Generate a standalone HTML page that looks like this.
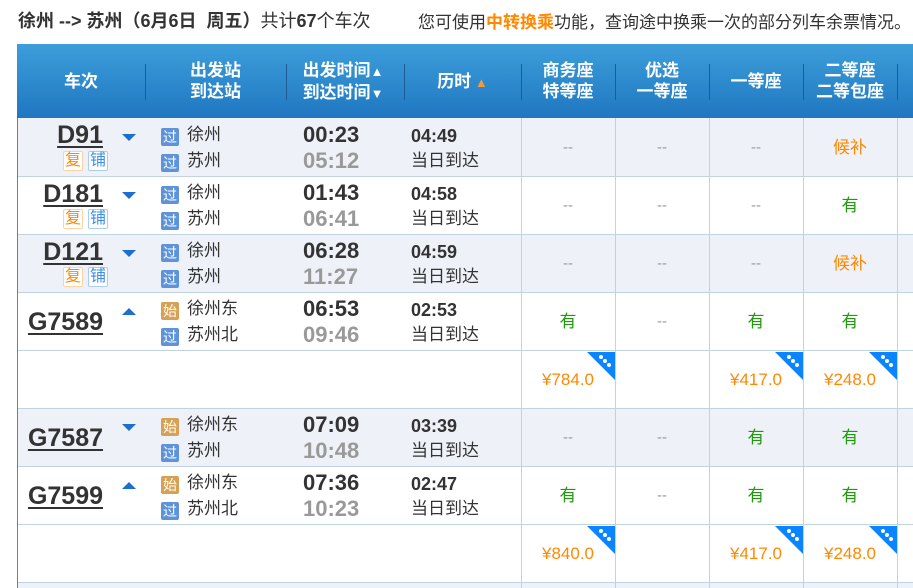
<!DOCTYPE html>
<html><head><meta charset="utf-8"><style>
*{margin:0;padding:0;box-sizing:border-box}
html,body{width:913px;height:588px;overflow:hidden}
body{background:#fff;font-family:"Liberation Sans","Noto Sans CJK SC",sans-serif;position:relative;color:#333}
.a{position:absolute;white-space:nowrap}
.title{left:18px;top:7px;font-size:18px;color:#333}
.title2{left:418px;top:8px;font-size:17px;color:#333}
.hdr{left:17px;top:44px;width:896px;height:74px;background:linear-gradient(#3d9edb,#1f77c0)}
.ht{position:absolute;color:#fff;font-weight:bold;font-size:17px;line-height:21px;text-align:center;white-space:nowrap}
.sep{position:absolute;top:20px;width:1px;height:36px;background:#1d5c96}
.row{position:absolute;left:17px;width:896px;height:58px;border-bottom:1px solid #bfd3e0}
.g{background:#eef1f8}
.w{background:#fff}
.vl{position:absolute;top:118px;width:1px;height:470px;background:#bfd3e0}
.tn{position:absolute;right:810px;font-weight:bold;font-size:25px;line-height:28px;text-decoration:underline;text-underline-offset:3px;color:#333}
.tri{position:absolute;left:122px;width:0;height:0;border-left:7px solid transparent;border-right:7px solid transparent}
.dn{border-top:7px solid #1a6fd1}
.up{border-bottom:7px solid #1a6fd1}
.ic{position:absolute;left:161px;width:18px;height:18px;border-radius:2px;color:#fff;font-size:14px;line-height:18px;text-align:center}
.guo{background:#5e93da}
.shi{background:#d6a055}
.st{position:absolute;left:187px;font-size:17px;line-height:20px}
.t1{position:absolute;left:303px;font-weight:bold;font-size:22px;line-height:24px;color:#333}
.t2{position:absolute;left:303px;font-weight:bold;font-size:22px;line-height:24px;color:#999}
.d1{position:absolute;left:411px;font-weight:bold;font-size:18px;line-height:20px}
.d2{position:absolute;left:411px;font-size:17px;line-height:20px}
.c{position:absolute;width:94px;text-align:center;font-size:17px;line-height:20px}
.dash{color:#999;font-size:15px}
.y{color:#1f9a0a}
.h{color:#ff8800}
.p{color:#ff8800;font-size:17px}
.fb{position:absolute;width:20px;height:20px;font-size:16px;line-height:18px;text-align:center;border:1px solid;border-radius:2px}
.corner{position:absolute;width:28px;height:28px}
</style></head><body>
<div class="a title"><b>徐州 --&gt; 苏州（6月6日&nbsp; 周五）</b>共计<b>67</b>个车次</div>
<div class="a title2">您可使用<span style="color:#ff8800;font-weight:bold">中转换乘</span>功能，查询途中换乘一次的部分列车余票情况。</div>
<div class="a hdr">
<div class="ht" style="left:0;width:128px;top:27px">车次</div>
<div class="ht" style="left:128px;width:141px;top:16px">出发站<br>到达站</div>
<div class="ht" style="left:269px;width:118px;top:16px;padding-right:4px">出发时间<span style="font-size:13px">▲</span><br>到达时间<span style="font-size:13px">▼</span></div>
<div class="ht" style="left:387px;width:117px;top:27px">历时<span style="font-size:13px;color:#f39a3a"> ▲</span></div>
<div class="ht" style="left:504px;width:94px;top:16px">商务座<br>特等座</div>
<div class="ht" style="left:598px;width:94px;top:16px">优选<br>一等座</div>
<div class="ht" style="left:692px;width:94px;top:27px">一等座</div>
<div class="ht" style="left:786px;width:94px;top:16px">二等座<br>二等包座</div>
<div class="sep" style="left:128px"></div><div class="sep" style="left:269px"></div><div class="sep" style="left:387px"></div><div class="sep" style="left:504px"></div><div class="sep" style="left:598px"></div><div class="sep" style="left:692px"></div><div class="sep" style="left:786px"></div><div class="sep" style="left:880px"></div>
</div>
<div class="row g" style="top:118px;height:59px"></div>
<div class="row w" style="top:177px"></div>
<div class="row g" style="top:235px"></div>
<div class="row w" style="top:293px"></div>
<div class="row w" style="top:351px"></div>
<div class="row g" style="top:409px"></div>
<div class="row w" style="top:467px"></div>
<div class="row w" style="top:525px"></div>
<div class="row g" style="top:583px;border:none;height:5px"></div>
<div class="a" style="left:17px;top:118px;width:1px;height:470px;background:#3b8fd0"></div>
<div class="vl" style="left:521px"></div><div class="vl" style="left:615px"></div><div class="vl" style="left:709px"></div><div class="vl" style="left:803px"></div><div class="vl" style="left:897px"></div>

<!-- Row D91 -->
<div class="tn" style="top:121px">D91</div>
<div class="fb" style="left:63px;top:151px;color:#ff8800;border-color:#ffd3a0;background:#fff">复</div>
<div class="fb" style="left:88px;top:151px;color:#3a8ee6;border-color:#a9cdf3;background:#fff">铺</div>
<div class="tri dn" style="top:134px"></div>
<div class="ic guo" style="top:128px">过</div><div class="st" style="top:125px">徐州</div>
<div class="ic guo" style="top:154px">过</div><div class="st" style="top:151px">苏州</div>
<div class="t1" style="top:123px">00:23</div><div class="t2" style="top:149px">05:12</div>
<div class="d1" style="top:126px">04:49</div><div class="d2" style="top:151px">当日到达</div>
<div class="c dash" style="left:521px;top:138px">--</div><div class="c dash" style="left:615px;top:138px">--</div><div class="c dash" style="left:709px;top:138px">--</div><div class="c h" style="left:803px;top:138px">候补</div>

<!-- D181 -->
<div class="tn" style="top:180px">D181</div>
<div class="fb" style="left:63px;top:209px;color:#ff8800;border-color:#ffd3a0;background:#fff">复</div>
<div class="fb" style="left:88px;top:209px;color:#3a8ee6;border-color:#a9cdf3;background:#fff">铺</div>
<div class="tri dn" style="top:192px"></div>
<div class="ic guo" style="top:186px">过</div><div class="st" style="top:183px">徐州</div>
<div class="ic guo" style="top:212px">过</div><div class="st" style="top:209px">苏州</div>
<div class="t1" style="top:181px">01:43</div><div class="t2" style="top:207px">06:41</div>
<div class="d1" style="top:184px">04:58</div><div class="d2" style="top:209px">当日到达</div>
<div class="c dash" style="left:521px;top:196px">--</div><div class="c dash" style="left:615px;top:196px">--</div><div class="c dash" style="left:709px;top:196px">--</div><div class="c y" style="left:803px;top:196px">有</div>

<!-- D121 -->
<div class="tn" style="top:238px">D121</div>
<div class="fb" style="left:63px;top:267px;color:#ff8800;border-color:#ffd3a0;background:#fff">复</div>
<div class="fb" style="left:88px;top:267px;color:#3a8ee6;border-color:#a9cdf3;background:#fff">铺</div>
<div class="tri dn" style="top:250px"></div>
<div class="ic guo" style="top:244px">过</div><div class="st" style="top:241px">徐州</div>
<div class="ic guo" style="top:270px">过</div><div class="st" style="top:267px">苏州</div>
<div class="t1" style="top:239px">06:28</div><div class="t2" style="top:265px">11:27</div>
<div class="d1" style="top:242px">04:59</div><div class="d2" style="top:267px">当日到达</div>
<div class="c dash" style="left:521px;top:254px">--</div><div class="c dash" style="left:615px;top:254px">--</div><div class="c dash" style="left:709px;top:254px">--</div><div class="c h" style="left:803px;top:254px">候补</div>

<!-- G7589 -->
<div class="tn" style="top:308px">G7589</div>
<div class="tri up" style="top:308px"></div>
<div class="ic shi" style="top:302px">始</div><div class="st" style="top:299px">徐州东</div>
<div class="ic guo" style="top:328px">过</div><div class="st" style="top:325px">苏州北</div>
<div class="t1" style="top:297px">06:53</div><div class="t2" style="top:323px">09:46</div>
<div class="d1" style="top:300px">02:53</div><div class="d2" style="top:325px">当日到达</div>
<div class="c y" style="left:521px;top:312px">有</div><div class="c dash" style="left:615px;top:312px">--</div><div class="c y" style="left:709px;top:312px">有</div><div class="c y" style="left:803px;top:312px">有</div>
<div class="c p" style="left:521px;top:370px">¥784.0</div><div class="c p" style="left:709px;top:370px">¥417.0</div><div class="c p" style="left:803px;top:370px">¥248.0</div>

<!-- G7587 -->
<div class="tn" style="top:424px">G7587</div>
<div class="tri dn" style="top:424px"></div>
<div class="ic shi" style="top:418px">始</div><div class="st" style="top:415px">徐州东</div>
<div class="ic guo" style="top:444px">过</div><div class="st" style="top:441px">苏州</div>
<div class="t1" style="top:413px">07:09</div><div class="t2" style="top:439px">10:48</div>
<div class="d1" style="top:416px">03:39</div><div class="d2" style="top:441px">当日到达</div>
<div class="c dash" style="left:521px;top:428px">--</div><div class="c dash" style="left:615px;top:428px">--</div><div class="c y" style="left:709px;top:428px">有</div><div class="c y" style="left:803px;top:428px">有</div>

<!-- G7599 -->
<div class="tn" style="top:482px">G7599</div>
<div class="tri up" style="top:482px"></div>
<div class="ic shi" style="top:476px">始</div><div class="st" style="top:473px">徐州东</div>
<div class="ic guo" style="top:502px">过</div><div class="st" style="top:499px">苏州北</div>
<div class="t1" style="top:471px">07:36</div><div class="t2" style="top:497px">10:23</div>
<div class="d1" style="top:474px">02:47</div><div class="d2" style="top:499px">当日到达</div>
<div class="c y" style="left:521px;top:486px">有</div><div class="c dash" style="left:615px;top:486px">--</div><div class="c y" style="left:709px;top:486px">有</div><div class="c y" style="left:803px;top:486px">有</div>
<div class="c p" style="left:521px;top:544px">¥840.0</div><div class="c p" style="left:709px;top:544px">¥417.0</div><div class="c p" style="left:803px;top:544px">¥248.0</div>

<svg class="corner" style="left:587px;top:352px" viewBox="0 0 28 28"><path d="M0 0H28V28Z" fill="#0a84ff"/><circle cx="14" cy="5" r="2" fill="#fff"/><circle cx="18" cy="9" r="2" fill="#fff"/><circle cx="22" cy="13" r="2" fill="#fff"/></svg>
<svg class="corner" style="left:775px;top:352px" viewBox="0 0 28 28"><path d="M0 0H28V28Z" fill="#0a84ff"/><circle cx="14" cy="5" r="2" fill="#fff"/><circle cx="18" cy="9" r="2" fill="#fff"/><circle cx="22" cy="13" r="2" fill="#fff"/></svg>
<svg class="corner" style="left:869px;top:352px" viewBox="0 0 28 28"><path d="M0 0H28V28Z" fill="#0a84ff"/><circle cx="14" cy="5" r="2" fill="#fff"/><circle cx="18" cy="9" r="2" fill="#fff"/><circle cx="22" cy="13" r="2" fill="#fff"/></svg>
<svg class="corner" style="left:587px;top:526px" viewBox="0 0 28 28"><path d="M0 0H28V28Z" fill="#0a84ff"/><circle cx="14" cy="5" r="2" fill="#fff"/><circle cx="18" cy="9" r="2" fill="#fff"/><circle cx="22" cy="13" r="2" fill="#fff"/></svg>
<svg class="corner" style="left:775px;top:526px" viewBox="0 0 28 28"><path d="M0 0H28V28Z" fill="#0a84ff"/><circle cx="14" cy="5" r="2" fill="#fff"/><circle cx="18" cy="9" r="2" fill="#fff"/><circle cx="22" cy="13" r="2" fill="#fff"/></svg>
<svg class="corner" style="left:869px;top:526px" viewBox="0 0 28 28"><path d="M0 0H28V28Z" fill="#0a84ff"/><circle cx="14" cy="5" r="2" fill="#fff"/><circle cx="18" cy="9" r="2" fill="#fff"/><circle cx="22" cy="13" r="2" fill="#fff"/></svg>
</body></html>
